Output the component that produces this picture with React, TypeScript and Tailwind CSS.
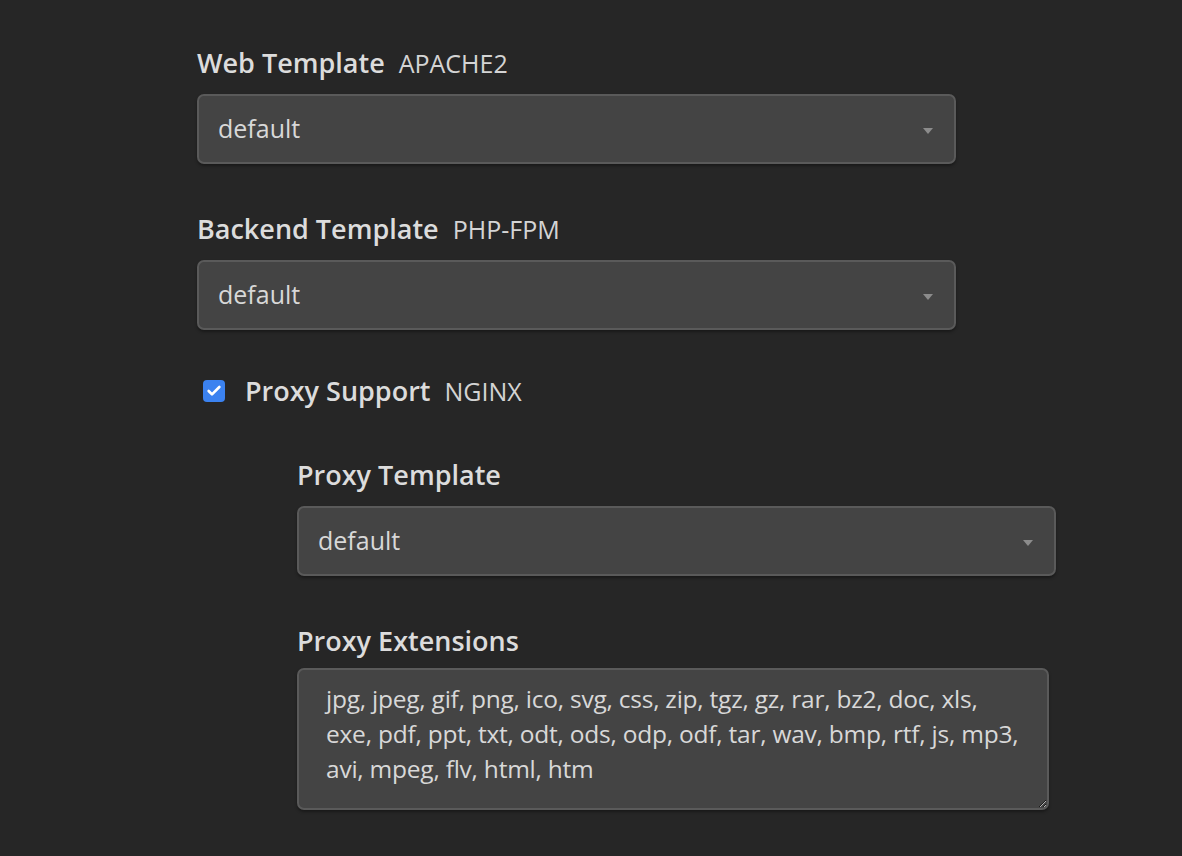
import { Check } from 'lucide-react';

const font = { fontFamily: '"Open Sans", "Noto Sans", sans-serif' };

const Label = ({ title, tag }: { title: string; tag?: string }) => (
  <div className="flex items-baseline gap-[14px]">
    <span className="text-[27px] font-semibold leading-[36px] text-[#dcdcdc]">{title}</span>
    {tag && <span className="text-[25px] leading-[36px] text-[#d4d4d4]">{tag}</span>}
  </div>
);

const FakeSelect = ({ value }: { value: string }) => (
  <div className="relative flex h-[70px] w-[759px] items-center rounded-[7px] border-2 border-[#5a5a5a] bg-[#444444] pl-[19px] text-[25px] text-[#d8d8d8] shadow-[0_2px_3px_rgba(0,0,0,0.35)]">
    {value}
    <span className="absolute right-[21px] top-[32px] h-0 w-0 border-x-[5px] border-t-[6px] border-x-transparent border-t-[#8c8c8c]" />
  </div>
);

const extensions = [
  'jpg, jpeg, gif, png, ico, svg, css, zip, tgz, gz, rar, bz2, doc, xls,',
  'exe, pdf, ppt, txt, odt, ods, odp, odf, tar, wav, bmp, rtf, js, mp3,',
  'avi, mpeg, flv, html, htm',
].join('\n');

export default function App() {
  return (
    <div className="min-h-[856px] w-full bg-[#262626]" style={font}>
      <div className="flex flex-col pl-[197px] pt-[45px]">
        <Label title="Web Template" tag="APACHE2" />
        <div className="mt-[13px]">
          <FakeSelect value="default" />
        </div>

        <div className="mt-[47px]">
          <Label title="Backend Template" tag="PHP-FPM" />
        </div>
        <div className="mt-[13px]">
          <FakeSelect value="default" />
        </div>

        <div className="mt-[43px] flex items-center gap-[20px] pl-[6px]">
          <div className="flex h-[22px] w-[22px] items-center justify-center rounded-[4px] bg-[#3b82f0]">
            <Check className="h-[16px] w-[16px] text-white" strokeWidth={4} />
          </div>
          <Label title="Proxy Support" tag="NGINX" />
        </div>

        <div className="flex flex-col pl-[100px]">
          <div className="mt-[48px]">
            <Label title="Proxy Template" />
          </div>
          <div className="mt-[13px]">
            <FakeSelect value="default" />
          </div>

          <div className="mt-[47px]">
            <Label title="Proxy Extensions" />
          </div>
          <textarea
            readOnly
            defaultValue={extensions}
            wrap="off"
            className="mt-[9px] h-[142px] w-[752px] overflow-hidden rounded-[7px] border-2 border-[#5a5a5a] bg-[#444444] pl-[27px] pt-[11px] text-[24.5px] leading-[35px] tracking-[-0.23px] text-[#d8d8d8] shadow-[0_2px_3px_rgba(0,0,0,0.35)] outline-none"
            style={font}
          />
        </div>
      </div>
    </div>
  );
}
